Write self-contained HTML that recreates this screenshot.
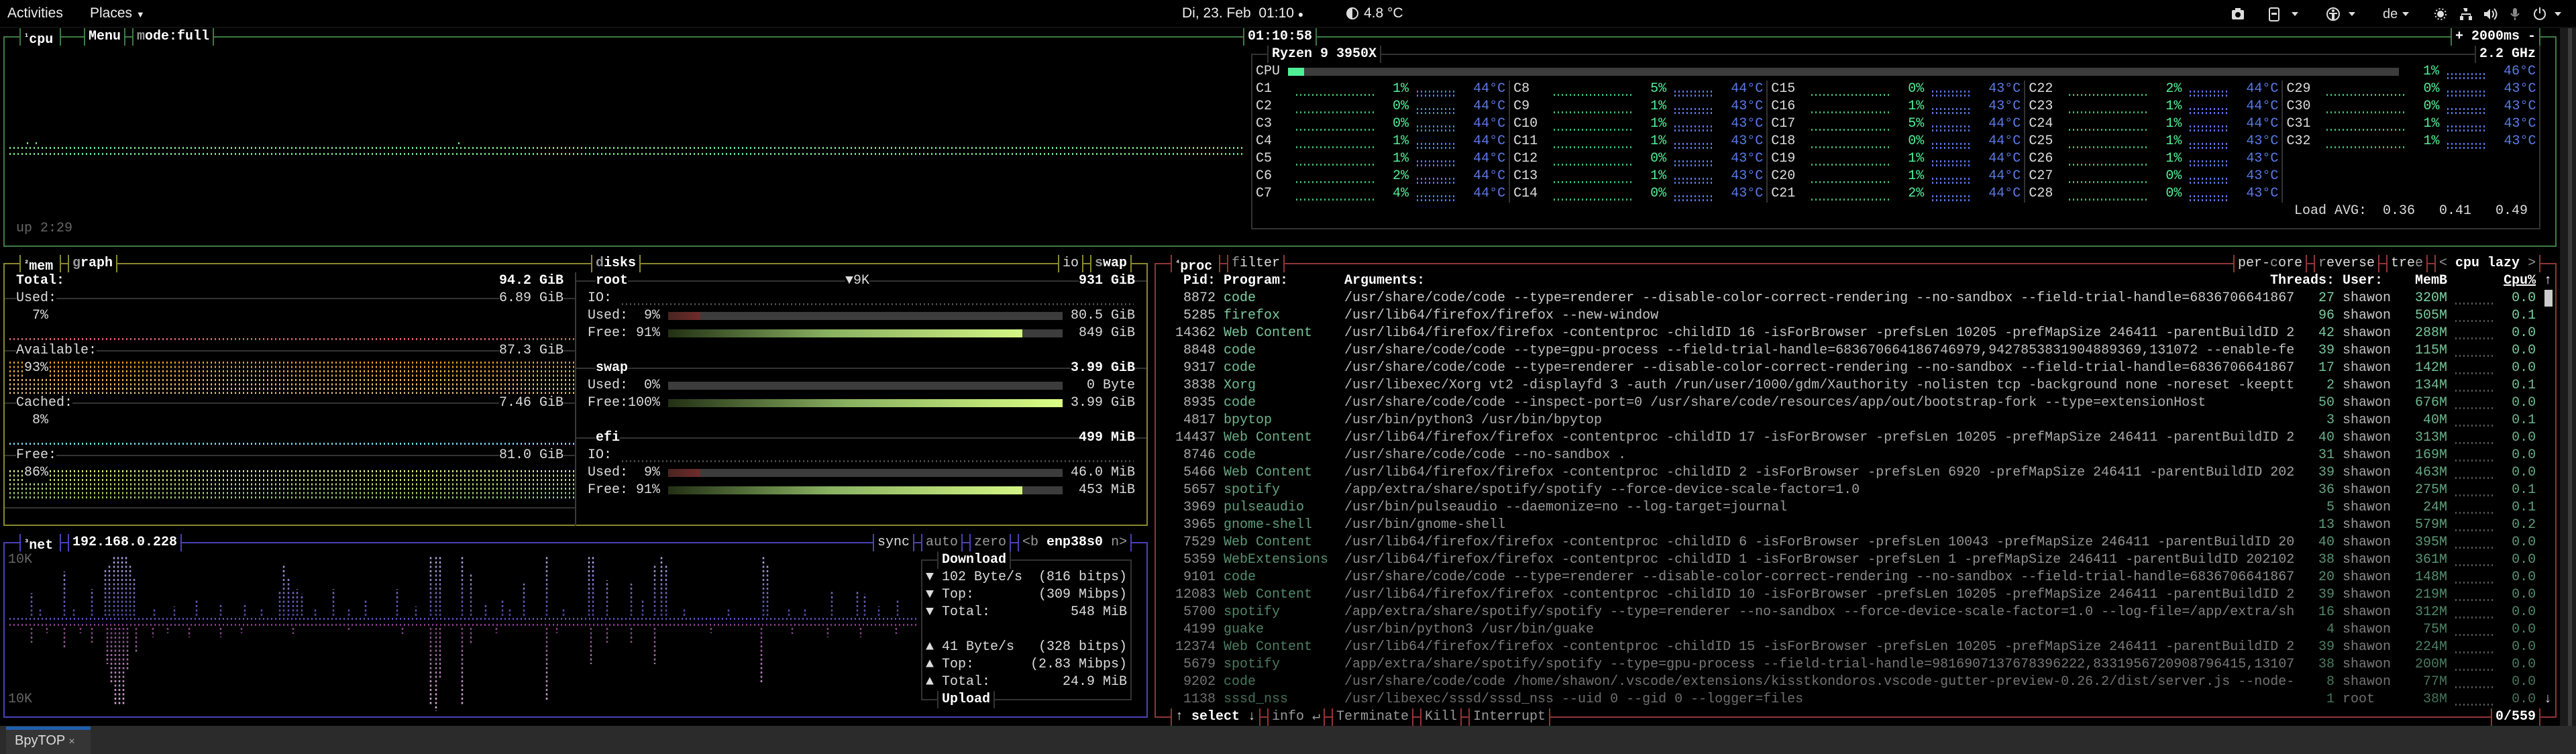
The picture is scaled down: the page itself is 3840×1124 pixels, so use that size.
<!DOCTYPE html>
<html><head><meta charset="utf-8">
<style>
*{box-sizing:border-box}
body{margin:0;width:3840px;height:1124px;background:#000;overflow:hidden;position:relative;font-family:"Liberation Mono","DejaVu Sans Mono",monospace;font-size:20px;color:#ccc}
.p{position:absolute;margin:0;font:inherit;line-height:26px;white-space:pre}
.b{position:absolute;border:2px solid}
.t{position:absolute;height:26px;line-height:26px;background:#000;white-space:pre;border-left:2px solid;border-right:2px solid;padding-left:5px;color:#eee}
.h{position:absolute;height:2px;background:#333}
.v{position:absolute;width:2px;background:#333}
.x{position:absolute;line-height:26px;height:26px;white-space:pre;background:#000}
.d{position:absolute;-webkit-mask-image:repeating-linear-gradient(90deg,#000 0 2px,transparent 2px 6px);mask-image:repeating-linear-gradient(90deg,#000 0 2px,transparent 2px 6px)}
.w{color:#fff;font-weight:bold}
.g{color:#80d0a3}
.n{color:#ddd}
.q{color:#50f095}
.u{color:#5a7ae8}
.k{color:#777}
.bar{position:absolute;height:12px}
.top{position:absolute;top:0;left:0;width:3840px;height:42px;background:#000;font-family:"Liberation Sans",sans-serif;font-size:21px;color:#eee}
.top span{position:absolute;top:0;line-height:40px;white-space:pre}
</style></head><body>

<!-- top bar -->
<div class="top">
<span style="left:11px">Activities</span>
<span style="left:134px">Places <span style="position:static;font-size:13px">▼</span></span>
<span style="left:1762px">Di, 23. Feb  01:10 <span style="position:static;font-size:14px">●</span></span>
<svg style="position:absolute;left:2006px;top:10px" width="20" height="20" viewBox="0 0 20 20"><circle cx="10" cy="10" r="8" fill="none" stroke="#ddd" stroke-width="2"/><path d="M10 2A8 8 0 0 0 10 18Z" fill="#ddd"/></svg>
<span style="left:2033px">4.8 °C</span>
<svg style="position:absolute;left:3326px;top:10px" width="500" height="22" viewBox="0 0 500 22" fill="#ddd">
<rect x="1" y="5" width="18" height="14" rx="2"/><circle cx="10" cy="12" r="4" fill="#000"/><rect x="6" y="2" width="8" height="4"/>
<rect x="57" y="2" width="14" height="19" rx="2" fill="none" stroke="#ddd" stroke-width="2"/><rect x="60" y="9" width="8" height="3"/>
<path d="M90 8h10l-5 6z"/>
<circle cx="152" cy="11" r="9" fill="none" stroke="#ddd" stroke-width="2"/><circle cx="152" cy="6" r="2"/><path d="M146 9h12v2h-4v8h-4v-8h-4z"/>
<path d="M175 8h10l-5 6z"/>
<text x="226" y="17" font-family="Liberation Sans" font-size="20" fill="#ddd">de</text>
<path d="M255 8h10l-5 6z"/>
<circle cx="312" cy="11" r="5"/><circle cx="312" cy="11" r="8" fill="none" stroke="#ddd" stroke-width="2" stroke-dasharray="2 3"/>
<path d="M346 2h6v5h-2v3h7v4h2v6h-5v-6h2v-2h-12v2h2v6h-5v-6h2v-4h7v-3h-2z"/>
<path d="M377 8h4l5-5v16l-5-5h-4z"/><path d="M389 6q4 5 0 10M392 3q7 8 0 16" fill="none" stroke="#ddd" stroke-width="2"/>
<rect x="420" y="2" width="6" height="11" rx="3" fill="#888"/><path d="M417 10q6 8 12 0M423 16v4" fill="none" stroke="#888" stroke-width="2"/>
<path d="M456 4a8 8 0 1 0 8 0" fill="none" stroke="#ddd" stroke-width="2"/><rect x="459" y="1" width="2" height="9"/>
<path d="M482 8h10l-5 6z"/>
</svg>
</div>
<div style="position:absolute;left:0;top:40px;width:3840px;height:2px;background:#111"></div>

<!-- terminal scrollbar -->
<div style="position:absolute;left:3816px;top:42px;width:24px;height:1040px;background:#1b1b1b"></div>
<div style="position:absolute;left:3828px;top:42px;width:6px;height:1040px;background:#3c3c3c"></div>

<!-- ===== CPU BOX ===== -->
<div class="b" style="left:5px;top:54px;width:3806px;height:314px;border-color:#3d7b46"></div>
<div class="t" style="left:29px;top:42px;width:62px;border-color:#3d7b46"><span class="w"><span style="font-size:12px;vertical-align:6px">¹</span>cpu</span></div>
<div class="t" style="left:125px;top:42px;width:62px;border-color:#3d7b46"><span class="w">Menu</span></div>
<div class="t" style="left:197px;top:42px;width:122px;border-color:#3d7b46"><span class="w"><span style="color:#999">m</span>ode:full</span></div>
<div class="t" style="left:1853px;top:42px;width:110px;border-color:#3d7b46"><span class="w">01:10:58</span></div>
<div class="t" style="left:3653px;top:42px;width:134px;border-color:#3d7b46"><span class="w">+ 2000ms -</span></div>

<!-- cpu graph -->
<div class="d" style="left:14px;top:219px;width:1840px;height:3px;background:#74e08a"></div>
<div class="d" style="left:14px;top:228px;width:1840px;height:3px;background:#74e08a"></div>
<div style="position:absolute;left:40px;top:212px;width:2px;height:3px;background:#74e08a"></div>
<div style="position:absolute;left:53px;top:212px;width:2px;height:3px;background:#74e08a"></div>
<div style="position:absolute;left:683px;top:212px;width:2px;height:3px;background:#74e08a"></div>
<div class="p" style="left:24px;top:328px;color:#666">up 2:29</div>

<!-- cpu sub box -->
<div class="b" style="left:1865px;top:80px;width:1922px;height:262px;border-color:#333"></div>
<div class="t" style="left:1889px;top:68px;width:170px;border-color:#333"><span class="w">Ryzen 9 3950X</span></div>
<div class="t" style="left:3689px;top:68px;width:98px;border-color:#333"><span class="w">2.2 GHz</span></div>
<div class="p n" style="left:1872px;top:94px">CPU</div>
<div class="bar" style="left:1920px;top:101px;width:1656px;background:#3c3c3c"></div>
<div class="bar" style="left:1920px;top:101px;width:24px;background:#50f095"></div>
<div class="p q" style="left:3612px;top:94px">1%</div>
<div class="p u" style="left:3732px;top:94px">46°C</div>
<div style="position:absolute;left:3648px;top:94px;width:60px;height:26px;-webkit-mask-image:linear-gradient(180deg,transparent 0 15px,#000 15px 18px,transparent 18px 21px,#000 21px 24px,transparent 24px);"><div class="d" style="left:0;top:0;width:60px;height:26px;background:#5a7ae8"></div></div>

<!-- core text -->
<div class="p" style="left:1872px;top:120px"><span class="n">C1 </span>            <span class="q">  1%</span>        <span class="u">44°C</span> <span class="n">C8 </span>            <span class="q">  5%</span>        <span class="u">44°C</span> <span class="n">C15</span>            <span class="q">  0%</span>        <span class="u">43°C</span> <span class="n">C22</span>            <span class="q">  2%</span>        <span class="u">44°C</span> <span class="n">C29</span>            <span class="q">  0%</span>        <span class="u">43°C</span>
<span class="n">C2 </span>            <span class="q">  0%</span>        <span class="u">44°C</span> <span class="n">C9 </span>            <span class="q">  1%</span>        <span class="u">43°C</span> <span class="n">C16</span>            <span class="q">  1%</span>        <span class="u">43°C</span> <span class="n">C23</span>            <span class="q">  1%</span>        <span class="u">44°C</span> <span class="n">C30</span>            <span class="q">  0%</span>        <span class="u">43°C</span>
<span class="n">C3 </span>            <span class="q">  0%</span>        <span class="u">44°C</span> <span class="n">C10</span>            <span class="q">  1%</span>        <span class="u">43°C</span> <span class="n">C17</span>            <span class="q">  5%</span>        <span class="u">44°C</span> <span class="n">C24</span>            <span class="q">  1%</span>        <span class="u">44°C</span> <span class="n">C31</span>            <span class="q">  1%</span>        <span class="u">43°C</span>
<span class="n">C4 </span>            <span class="q">  1%</span>        <span class="u">44°C</span> <span class="n">C11</span>            <span class="q">  1%</span>        <span class="u">43°C</span> <span class="n">C18</span>            <span class="q">  0%</span>        <span class="u">44°C</span> <span class="n">C25</span>            <span class="q">  1%</span>        <span class="u">43°C</span> <span class="n">C32</span>            <span class="q">  1%</span>        <span class="u">43°C</span>
<span class="n">C5 </span>            <span class="q">  1%</span>        <span class="u">44°C</span> <span class="n">C12</span>            <span class="q">  0%</span>        <span class="u">43°C</span> <span class="n">C19</span>            <span class="q">  1%</span>        <span class="u">44°C</span> <span class="n">C26</span>            <span class="q">  1%</span>        <span class="u">43°C</span>
<span class="n">C6 </span>            <span class="q">  2%</span>        <span class="u">44°C</span> <span class="n">C13</span>            <span class="q">  1%</span>        <span class="u">43°C</span> <span class="n">C20</span>            <span class="q">  1%</span>        <span class="u">44°C</span> <span class="n">C27</span>            <span class="q">  0%</span>        <span class="u">43°C</span>
<span class="n">C7 </span>            <span class="q">  4%</span>        <span class="u">44°C</span> <span class="n">C14</span>            <span class="q">  0%</span>        <span class="u">43°C</span> <span class="n">C21</span>            <span class="q">  2%</span>        <span class="u">44°C</span> <span class="n">C28</span>            <span class="q">  0%</span>        <span class="u">43°C</span></div>
<!-- separators -->
<div class="v" style="left:2249px;top:120px;height:182px"></div>
<div class="v" style="left:2633px;top:120px;height:182px"></div>
<div class="v" style="left:3017px;top:120px;height:182px"></div>
<div class="v" style="left:3401px;top:120px;height:182px"></div>
<!-- core graphs + minibars -->
<div style="position:absolute;left:1932px;top:120px;width:120px;height:182px;-webkit-mask-image:repeating-linear-gradient(180deg,transparent 0 20px,#000 20px 23px,transparent 23px 26px)"><div class="d" style="left:0;top:0;width:120px;height:182px;background:#3fb870"></div></div>
<div style="position:absolute;left:2316px;top:120px;width:120px;height:182px;-webkit-mask-image:repeating-linear-gradient(180deg,transparent 0 20px,#000 20px 23px,transparent 23px 26px)"><div class="d" style="left:0;top:0;width:120px;height:182px;background:#3fb870"></div></div>
<div style="position:absolute;left:2700px;top:120px;width:120px;height:182px;-webkit-mask-image:repeating-linear-gradient(180deg,transparent 0 20px,#000 20px 23px,transparent 23px 26px)"><div class="d" style="left:0;top:0;width:120px;height:182px;background:#3fb870"></div></div>
<div style="position:absolute;left:3084px;top:120px;width:120px;height:182px;-webkit-mask-image:repeating-linear-gradient(180deg,transparent 0 20px,#000 20px 23px,transparent 23px 26px)"><div class="d" style="left:0;top:0;width:120px;height:182px;background:#3fb870"></div></div>
<div style="position:absolute;left:3468px;top:120px;width:120px;height:104px;-webkit-mask-image:repeating-linear-gradient(180deg,transparent 0 20px,#000 20px 23px,transparent 23px 26px)"><div class="d" style="left:0;top:0;width:120px;height:104px;background:#3fb870"></div></div>
<div style="position:absolute;left:2112px;top:120px;width:60px;height:182px;-webkit-mask-image:repeating-linear-gradient(180deg,transparent 0 15px,#000 15px 18px,transparent 18px 21px,#000 21px 24px,transparent 24px 26px)"><div class="d" style="left:0;top:0;width:60px;height:182px;background:#5a7ae8"></div></div>
<div style="position:absolute;left:2496px;top:120px;width:60px;height:182px;-webkit-mask-image:repeating-linear-gradient(180deg,transparent 0 15px,#000 15px 18px,transparent 18px 21px,#000 21px 24px,transparent 24px 26px)"><div class="d" style="left:0;top:0;width:60px;height:182px;background:#5a7ae8"></div></div>
<div style="position:absolute;left:2880px;top:120px;width:60px;height:182px;-webkit-mask-image:repeating-linear-gradient(180deg,transparent 0 15px,#000 15px 18px,transparent 18px 21px,#000 21px 24px,transparent 24px 26px)"><div class="d" style="left:0;top:0;width:60px;height:182px;background:#5a7ae8"></div></div>
<div style="position:absolute;left:3264px;top:120px;width:60px;height:182px;-webkit-mask-image:repeating-linear-gradient(180deg,transparent 0 15px,#000 15px 18px,transparent 18px 21px,#000 21px 24px,transparent 24px 26px)"><div class="d" style="left:0;top:0;width:60px;height:182px;background:#5a7ae8"></div></div>
<div style="position:absolute;left:3648px;top:120px;width:60px;height:104px;-webkit-mask-image:repeating-linear-gradient(180deg,transparent 0 15px,#000 15px 18px,transparent 18px 21px,#000 21px 24px,transparent 24px 26px)"><div class="d" style="left:0;top:0;width:60px;height:104px;background:#5a7ae8"></div></div>
<div class="p n" style="left:3420px;top:302px">Load AVG:  0.36   0.41   0.49</div>

<!-- ===== MEM / DISKS BOX ===== -->
<div class="b" style="left:5px;top:392px;width:1706px;height:392px;border-color:#8a882e"></div>
<div class="v" style="left:857px;top:406px;height:378px;background:#3a3a3a"></div>
<div class="t" style="left:29px;top:380px;width:62px;border-color:#8a882e"><span class="w"><span style="font-size:12px;vertical-align:6px">²</span>mem</span></div>
<div class="t" style="left:101px;top:380px;width:74px;border-color:#8a882e"><span class="w"><span style="color:#999">g</span>raph</span></div>
<div class="t" style="left:881px;top:380px;width:74px;border-color:#8a882e"><span class="w"><span style="color:#999">d</span>isks</span></div>
<div class="t" style="left:1577px;top:380px;width:38px;border-color:#8a882e"><span class="n">io</span></div>
<div class="t" style="left:1625px;top:380px;width:62px;border-color:#8a882e"><span class="w"><span style="color:#999">s</span>wap</span></div>

<!-- mem rules -->
<div class="h" style="left:7px;top:444px;width:851px"></div>
<div class="h" style="left:7px;top:522px;width:851px"></div>
<div class="h" style="left:7px;top:600px;width:851px"></div>
<div class="h" style="left:7px;top:678px;width:851px"></div>
<div class="h" style="left:7px;top:756px;width:851px"></div>
<!-- mem graphs -->
<div class="d" style="left:14px;top:504px;width:842px;height:3px;background:#d9626d"></div>
<div style="position:absolute;left:14px;top:539px;width:842px;height:48px;-webkit-mask-image:repeating-linear-gradient(180deg,#000 0 3px,transparent 3px 6.5px)"><div class="d" style="left:0;top:0;width:842px;height:48px;background:linear-gradient(180deg,#eea020,#f8cb8c)"></div></div>
<div class="d" style="left:14px;top:660px;width:842px;height:3px;background:#6fd8f0"></div>
<div style="position:absolute;left:14px;top:701px;width:842px;height:44px;-webkit-mask-image:repeating-linear-gradient(180deg,#000 0 3px,transparent 3px 6.5px)"><div class="d" style="left:0;top:0;width:842px;height:44px;background:linear-gradient(180deg,#dcf27e,#96cc66)"></div></div>
<!-- mem text -->
<div class="x w" style="left:24px;top:406px">Total:</div><div class="x w" style="left:744px;top:406px">94.2 GiB</div>
<div class="x n" style="left:24px;top:432px">Used:</div><div class="x n" style="left:744px;top:432px">6.89 GiB</div>
<div class="x n" style="left:48px;top:458px">7%</div>
<div class="x n" style="left:24px;top:510px">Available:</div><div class="x n" style="left:744px;top:510px">87.3 GiB</div>
<div class="x n" style="left:36px;top:536px">93%</div>
<div class="x n" style="left:24px;top:588px">Cached:</div><div class="x n" style="left:744px;top:588px">7.46 GiB</div>
<div class="x n" style="left:48px;top:614px">8%</div>
<div class="x n" style="left:24px;top:666px">Free:</div><div class="x n" style="left:744px;top:666px">81.0 GiB</div>
<div class="x n" style="left:36px;top:692px">86%</div>

<!-- disks -->
<div class="h" style="left:859px;top:418px;width:850px"></div>
<div class="h" style="left:859px;top:548px;width:850px"></div>
<div class="h" style="left:859px;top:652px;width:850px"></div>
<div class="x w" style="left:888px;top:406px">root</div><div class="x n" style="left:1260px;top:406px">▼9K</div><div class="x w" style="left:1608px;top:406px">931 GiB</div>
<div class="x n" style="left:876px;top:432px">IO:</div>
<div class="d" style="left:927px;top:452px;width:763px;height:3px;background:#4a4a4a"></div>
<div class="x n" style="left:876px;top:458px">Used:  9%</div>
<div class="bar" style="left:996px;top:465px;width:588px;background:#3c3c3c"></div>
<div class="bar" style="left:996px;top:465px;width:48px;background:linear-gradient(90deg,#4a2420,#6e2c2a)"></div>
<div class="x n" style="left:1596px;top:458px">80.5 GiB</div>
<div class="x n" style="left:876px;top:484px">Free: 91%</div>
<div class="bar" style="left:996px;top:491px;width:588px;background:#3c3c3c"></div>
<div class="bar" style="left:996px;top:491px;width:528px;background:linear-gradient(90deg,#223014,#88b060 45%,#d4f585)"></div>
<div class="x n" style="left:1608px;top:484px">849 GiB</div>
<div class="x w" style="left:888px;top:536px">swap</div><div class="x w" style="left:1596px;top:536px">3.99 GiB</div>
<div class="x n" style="left:876px;top:562px">Used:  0%</div>
<div class="bar" style="left:996px;top:569px;width:588px;background:#3c3c3c"></div>
<div class="x n" style="left:1620px;top:562px">0 Byte</div>
<div class="x n" style="left:876px;top:588px">Free:100%</div>
<div class="bar" style="left:996px;top:595px;width:588px;background:linear-gradient(90deg,#223014,#88b060 45%,#dcff85)"></div>
<div class="x n" style="left:1596px;top:588px">3.99 GiB</div>
<div class="x w" style="left:888px;top:640px">efi</div><div class="x w" style="left:1608px;top:640px">499 MiB</div>
<div class="x n" style="left:876px;top:666px">IO:</div>
<div class="d" style="left:927px;top:686px;width:763px;height:3px;background:#4a4a4a"></div>
<div class="x n" style="left:876px;top:692px">Used:  9%</div>
<div class="bar" style="left:996px;top:699px;width:588px;background:#3c3c3c"></div>
<div class="bar" style="left:996px;top:699px;width:48px;background:linear-gradient(90deg,#4a2420,#6e2c2a)"></div>
<div class="x n" style="left:1596px;top:692px">46.0 MiB</div>
<div class="x n" style="left:876px;top:718px">Free: 91%</div>
<div class="bar" style="left:996px;top:725px;width:588px;background:#3c3c3c"></div>
<div class="bar" style="left:996px;top:725px;width:528px;background:linear-gradient(90deg,#223014,#88b060 45%,#d4f585)"></div>
<div class="x n" style="left:1608px;top:718px">453 MiB</div>

<!-- ===== NET BOX ===== -->
<div class="b" style="left:5px;top:808px;width:1706px;height:262px;border-color:#4a41b8"></div>
<div class="t" style="left:29px;top:796px;width:62px;border-color:#4a41b8"><span class="w"><span style="font-size:12px;vertical-align:6px">³</span>net</span></div>
<div class="t" style="left:101px;top:796px;width:170px;border-color:#4a41b8"><span class="w">192.168.0.228</span></div>
<div class="t" style="left:1301px;top:796px;width:62px;border-color:#4a41b8"><span class="n">sync</span></div>
<div class="t" style="left:1373px;top:796px;width:62px;border-color:#4a41b8"><span style="color:#999">auto</span></div>
<div class="t" style="left:1445px;top:796px;width:62px;border-color:#4a41b8"><span style="color:#999">zero</span></div>
<div class="t" style="left:1517px;top:796px;width:170px;border-color:#4a41b8"><span class="n"><span style="color:#999">&lt;b</span> <b style="color:#fff">enp38s0</b> <span style="color:#999">n&gt;</span></span></div>
<div class="p" style="left:12px;top:822px;color:#666">10K</div>
<div class="p" style="left:12px;top:1030px;color:#666">10K</div>
<div class="d" style="left:14px;top:921px;width:1356px;height:3px;background:#5a4fb8"></div>
<div class="d" style="left:14px;top:930px;width:1356px;height:3px;background:#8a3a8c"></div>
<svg style="position:absolute;left:0;top:0" width="1380" height="1080" viewBox="0 0 1380 1080">
<defs>
<linearGradient id="dl" gradientUnits="userSpaceOnUse" x1="0" y1="827" x2="0" y2="920"><stop offset="0" stop-color="#b0a9de"/><stop offset="1" stop-color="#4f43a3"/></linearGradient>
<linearGradient id="ul" gradientUnits="userSpaceOnUse" x1="0" y1="934" x2="0" y2="1060"><stop offset="0" stop-color="#7d4180"/><stop offset="1" stop-color="#dcafde"/></linearGradient>
</defs>
<path stroke="url(#dl)" stroke-width="2.5" stroke-dasharray="3 3.5" fill="none" d="M47 918V884M96 918V852M137 918V878M157 918V850M163 918V843M170 918V827M176 918V827M182 918V827M188 918V827M194 918V840M200 918V860M293 918V895M329 918V900M365 918V900M417 918V880M423 918V843M430 918V860M437 918V880M443 918V878M450 918V885M497 918V878M545 918V895M592 918V878M642 918V827M650 918V827M656 918V827M689 918V827M702 918V855M724 918V900M749 918V895M781 918V870M815 918V827M878 918V827M884 918V827M905 918V865M941 918V870M958 918V895M976 918V840M986 918V827M993 918V840M1086 918V905M1138 918V830M1144 918V840M1176 918V905M1240 918V880M1278 918V880M1289 918V885M1338 918V895M60 918V908M110 918V906M230 918V908M260 918V904M390 918V905M470 918V908M520 918V906M620 918V904M760 918V906M840 918V906M1020 918V908M1200 918V906M1310 918V904"/>
<path stroke="url(#ul)" stroke-width="2.5" stroke-dasharray="3 3.5" fill="none" d="M47 936V958M96 936V965M137 936V958M160 936V990M166 936V1020M172 936V1053M178 936V1053M184 936V1053M190 936V1000M203 936V975M228 936V950M282 936V950M329 936V950M437 936V945M600 936V945M642 936V1053M650 936V1060M656 936V1010M689 936V1053M702 936V960M815 936V1043M881 936V990M905 936V958M941 936V958M976 936V990M1135 936V1020M1181 936V945M1234 936V950M1283 936V950M1336 936V945M70 936V944M120 936V944M250 936V944M360 936V944M520 936V942M740 936V944M830 936V944M1060 936V944"/>
</svg>
<div class="b" style="left:1373px;top:834px;width:314px;height:210px;border-color:#333"></div>
<div class="t" style="left:1397px;top:822px;width:110px;border-color:#333"><span class="w">Download</span></div>
<div class="t" style="left:1397px;top:1030px;width:86px;border-color:#333"><span class="w">Upload</span></div>
<div class="p n" style="left:1380px;top:848px">▼ 102 Byte/s  (816 bitps)
▼ Top:        (309 Mibps)
▼ Total:          548 MiB

▲ 41 Byte/s   (328 bitps)
▲ Top:       (2.83 Mibps)
▲ Total:         24.9 MiB</div>

<!-- ===== PROC BOX ===== -->
<div class="b" style="left:1721px;top:392px;width:2090px;height:678px;border-color:#923535"></div>
<div class="t" style="left:1745px;top:380px;width:74px;border-color:#923535"><span class="w"><span style="font-size:12px;vertical-align:6px">⁴</span>proc</span></div>
<div class="t" style="left:1829px;top:380px;width:86px;border-color:#923535"><span class="n"><span style="color:#999">f</span>ilter</span></div>
<div class="t" style="left:3329px;top:380px;width:110px;border-color:#923535"><span class="n">per-<span style="color:#999">c</span>ore</span></div>
<div class="t" style="left:3449px;top:380px;width:98px;border-color:#923535"><span class="n"><span style="color:#999">r</span>everse</span></div>
<div class="t" style="left:3557px;top:380px;width:62px;border-color:#923535"><span class="n">tre<span style="color:#999">e</span></span></div>
<div class="t" style="left:3629px;top:380px;width:158px;border-color:#923535"><span style="color:#999">&lt;</span> <span class="w">cpu lazy</span> <span style="color:#999">&gt;</span></div>
<div class="t" style="left:1745px;top:1056px;width:134px;border-color:#923535"><span class="n">↑ </span><span class="w">select</span><span class="n"> ↓</span></div>
<div class="t" style="left:1889px;top:1056px;width:86px;border-color:#923535"><span style="color:#999">info ↵</span></div>
<div class="t" style="left:1985px;top:1056px;width:122px;border-color:#923535"><span style="color:#999">Terminate</span></div>
<div class="t" style="left:2117px;top:1056px;width:62px;border-color:#923535"><span style="color:#999">Kill</span></div>
<div class="t" style="left:2189px;top:1056px;width:122px;border-color:#923535"><span style="color:#999">Interrupt</span></div>
<div class="t" style="left:3713px;top:1056px;width:74px;border-color:#923535"><span class="w">0/559</span></div>

<div class="p w" style="left:1764px;top:406px">Pid: Program:       Arguments:</div>
<div class="p w" style="left:3384px;top:406px">Threads: User:    MemB       <span style="text-decoration:underline">Cpu%</span> ↑</div>
<div style="position:absolute;left:3793px;top:432px;width:12px;height:25px;background:#ccc"></div>
<div class="p n" style="left:3792px;top:1030px">↓</div>
<div style="position:absolute;left:3660px;top:432px;width:60px;height:624px;-webkit-mask-image:repeating-linear-gradient(180deg,transparent 0 19px,#000 19px 22px,transparent 22px 26px)"><div class="d" style="left:0;top:0;width:60px;height:624px;background:#555"></div></div>

<div class="p" style="left:1752px;top:432px"><span style="opacity:1"> 8872 <span class="g">code</span></span>
<span style="opacity:.98"> 5285 <span class="g">firefox</span></span>
<span style="opacity:.96">14362 <span class="g">Web Content</span></span>
<span style="opacity:.94"> 8848 <span class="g">code</span></span>
<span style="opacity:.92"> 9317 <span class="g">code</span></span>
<span style="opacity:.9"> 3838 <span class="g">Xorg</span></span>
<span style="opacity:.88"> 8935 <span class="g">code</span></span>
<span style="opacity:.86"> 4817 <span class="g">bpytop</span></span>
<span style="opacity:.84">14437 <span class="g">Web Content</span></span>
<span style="opacity:.82"> 8746 <span class="g">code</span></span>
<span style="opacity:.8"> 5466 <span class="g">Web Content</span></span>
<span style="opacity:.78"> 5657 <span class="g">spotify</span></span>
<span style="opacity:.76"> 3969 <span class="g">pulseaudio</span></span>
<span style="opacity:.74"> 3965 <span class="g">gnome-shell</span></span>
<span style="opacity:.72"> 7529 <span class="g">Web Content</span></span>
<span style="opacity:.7"> 5359 <span class="g">WebExtensions</span></span>
<span style="opacity:.68"> 9101 <span class="g">code</span></span>
<span style="opacity:.66">12083 <span class="g">Web Content</span></span>
<span style="opacity:.64"> 5700 <span class="g">spotify</span></span>
<span style="opacity:.62"> 4199 <span class="g">guake</span></span>
<span style="opacity:.6">12374 <span class="g">Web Content</span></span>
<span style="opacity:.58"> 5679 <span class="g">spotify</span></span>
<span style="opacity:.56"> 9202 <span class="g">code</span></span>
<span style="opacity:.54"> 1138 <span class="g">sssd_nss</span></span></div>

<div class="p" style="left:2004px;top:432px;width:1416px;overflow:hidden"><span style="opacity:1">/usr/share/code/code --type=renderer --disable-color-correct-rendering --no-sandbox --field-trial-handle=6836706641867</span>
<span style="opacity:.98">/usr/lib64/firefox/firefox --new-window</span>
<span style="opacity:.96">/usr/lib64/firefox/firefox -contentproc -childID 16 -isForBrowser -prefsLen 10205 -prefMapSize 246411 -parentBuildID 2</span>
<span style="opacity:.94">/usr/share/code/code --type=gpu-process --field-trial-handle=683670664186746979,9427853831904889369,131072 --enable-fe</span>
<span style="opacity:.92">/usr/share/code/code --type=renderer --disable-color-correct-rendering --no-sandbox --field-trial-handle=6836706641867</span>
<span style="opacity:.9">/usr/libexec/Xorg vt2 -displayfd 3 -auth /run/user/1000/gdm/Xauthority -nolisten tcp -background none -noreset -keeptt</span>
<span style="opacity:.88">/usr/share/code/code --inspect-port=0 /usr/share/code/resources/app/out/bootstrap-fork --type=extensionHost</span>
<span style="opacity:.86">/usr/bin/python3 /usr/bin/bpytop</span>
<span style="opacity:.84">/usr/lib64/firefox/firefox -contentproc -childID 17 -isForBrowser -prefsLen 10205 -prefMapSize 246411 -parentBuildID 2</span>
<span style="opacity:.82">/usr/share/code/code --no-sandbox .</span>
<span style="opacity:.8">/usr/lib64/firefox/firefox -contentproc -childID 2 -isForBrowser -prefsLen 6920 -prefMapSize 246411 -parentBuildID 202</span>
<span style="opacity:.78">/app/extra/share/spotify/spotify --force-device-scale-factor=1.0</span>
<span style="opacity:.76">/usr/bin/pulseaudio --daemonize=no --log-target=journal</span>
<span style="opacity:.74">/usr/bin/gnome-shell</span>
<span style="opacity:.72">/usr/lib64/firefox/firefox -contentproc -childID 6 -isForBrowser -prefsLen 10043 -prefMapSize 246411 -parentBuildID 20</span>
<span style="opacity:.7">/usr/lib64/firefox/firefox -contentproc -childID 1 -isForBrowser -prefsLen 1 -prefMapSize 246411 -parentBuildID 202102</span>
<span style="opacity:.68">/usr/share/code/code --type=renderer --disable-color-correct-rendering --no-sandbox --field-trial-handle=6836706641867</span>
<span style="opacity:.66">/usr/lib64/firefox/firefox -contentproc -childID 10 -isForBrowser -prefsLen 10205 -prefMapSize 246411 -parentBuildID 2</span>
<span style="opacity:.64">/app/extra/share/spotify/spotify --type=renderer --no-sandbox --force-device-scale-factor=1.0 --log-file=/app/extra/sh</span>
<span style="opacity:.62">/usr/bin/python3 /usr/bin/guake</span>
<span style="opacity:.6">/usr/lib64/firefox/firefox -contentproc -childID 15 -isForBrowser -prefsLen 10205 -prefMapSize 246411 -parentBuildID 2</span>
<span style="opacity:.58">/app/extra/share/spotify/spotify --type=gpu-process --field-trial-handle=9816907137678396222,8331956720908796415,13107</span>
<span style="opacity:.56">/usr/share/code/code /home/shawon/.vscode/extensions/kisstkondoros.vscode-gutter-preview-0.26.2/dist/server.js --node-</span>
<span style="opacity:.54">/usr/libexec/sssd/sssd_nss --uid 0 --gid 0 --logger=files</span></div>

<div class="p" style="left:3420px;top:432px"><span style="opacity:1"><span class="g">   27</span> shawon   <span class="g">320M</span>        <span class="g">0.0</span></span>
<span style="opacity:.98"><span class="g">   96</span> shawon   <span class="g">505M</span>        <span class="g">0.1</span></span>
<span style="opacity:.96"><span class="g">   42</span> shawon   <span class="g">288M</span>        <span class="g">0.0</span></span>
<span style="opacity:.94"><span class="g">   39</span> shawon   <span class="g">115M</span>        <span class="g">0.0</span></span>
<span style="opacity:.92"><span class="g">   17</span> shawon   <span class="g">142M</span>        <span class="g">0.0</span></span>
<span style="opacity:.9"><span class="g">    2</span> shawon   <span class="g">134M</span>        <span class="g">0.1</span></span>
<span style="opacity:.88"><span class="g">   50</span> shawon   <span class="g">676M</span>        <span class="g">0.0</span></span>
<span style="opacity:.86"><span class="g">    3</span> shawon   <span class="g"> 40M</span>        <span class="g">0.1</span></span>
<span style="opacity:.84"><span class="g">   40</span> shawon   <span class="g">313M</span>        <span class="g">0.0</span></span>
<span style="opacity:.82"><span class="g">   31</span> shawon   <span class="g">169M</span>        <span class="g">0.0</span></span>
<span style="opacity:.8"><span class="g">   39</span> shawon   <span class="g">463M</span>        <span class="g">0.0</span></span>
<span style="opacity:.78"><span class="g">   36</span> shawon   <span class="g">275M</span>        <span class="g">0.1</span></span>
<span style="opacity:.76"><span class="g">    5</span> shawon   <span class="g"> 24M</span>        <span class="g">0.1</span></span>
<span style="opacity:.74"><span class="g">   13</span> shawon   <span class="g">579M</span>        <span class="g">0.2</span></span>
<span style="opacity:.72"><span class="g">   40</span> shawon   <span class="g">395M</span>        <span class="g">0.0</span></span>
<span style="opacity:.7"><span class="g">   38</span> shawon   <span class="g">361M</span>        <span class="g">0.0</span></span>
<span style="opacity:.68"><span class="g">   20</span> shawon   <span class="g">148M</span>        <span class="g">0.0</span></span>
<span style="opacity:.66"><span class="g">   39</span> shawon   <span class="g">219M</span>        <span class="g">0.0</span></span>
<span style="opacity:.64"><span class="g">   16</span> shawon   <span class="g">312M</span>        <span class="g">0.0</span></span>
<span style="opacity:.62"><span class="g">    4</span> shawon   <span class="g"> 75M</span>        <span class="g">0.0</span></span>
<span style="opacity:.6"><span class="g">   39</span> shawon   <span class="g">224M</span>        <span class="g">0.0</span></span>
<span style="opacity:.58"><span class="g">   38</span> shawon   <span class="g">200M</span>        <span class="g">0.0</span></span>
<span style="opacity:.56"><span class="g">    8</span> shawon   <span class="g"> 77M</span>        <span class="g">0.0</span></span>
<span style="opacity:.54"><span class="g">    1</span> root     <span class="g"> 38M</span>        <span class="g">0.0</span></span></div>

<!-- tab bar -->
<div style="position:absolute;left:0;top:1082px;width:3840px;height:42px;background:#2b2b2b"></div>
<div style="position:absolute;left:9px;top:1083px;width:126px;height:5px;background:#1f5fae"></div>
<div style="position:absolute;left:9px;top:1088px;width:126px;height:36px;background:#353535"></div>
<div style="position:absolute;left:22px;top:1088px;line-height:32px;font-family:'Liberation Sans',sans-serif;font-size:20px;color:#ddd;white-space:pre">BpyTOP <span style="font-size:16px;color:#aaa">×</span></div>
</body></html>
